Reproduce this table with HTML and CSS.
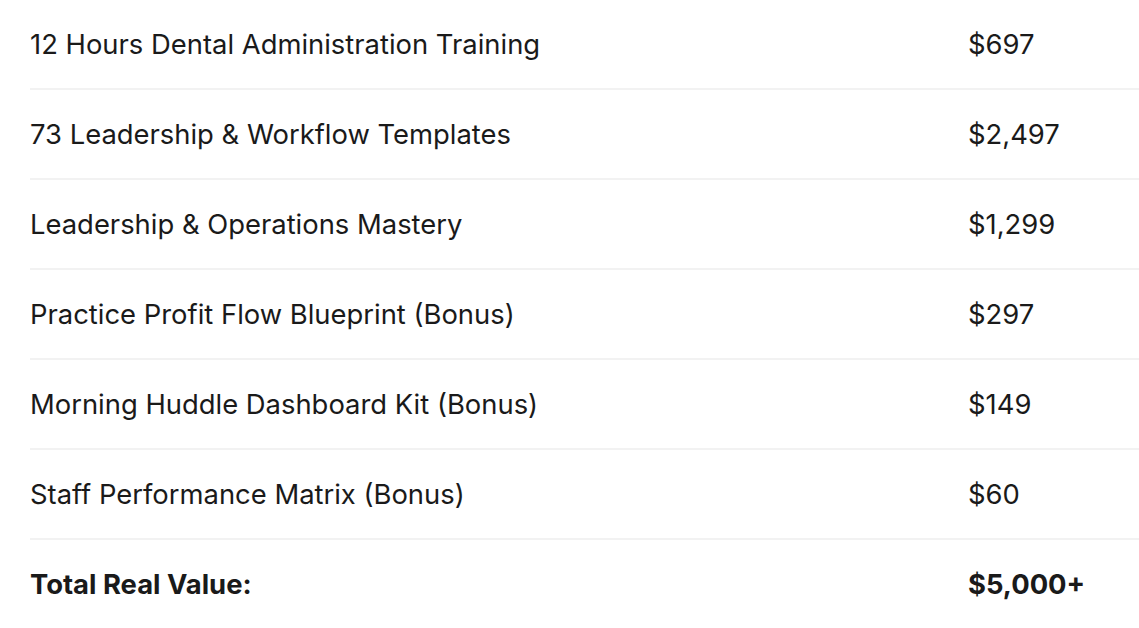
FILE: index.html
```html
<!DOCTYPE html>
<html lang="en">
<head>
<meta charset="utf-8">
<title>Value Stack</title>
<link rel="stylesheet" href="styles.css">
</head>
<body>
<div class="stack">
  <div class="row"><span class="item">12 Hours Dental Administration Training</span><span class="price">$697</span></div>
  <div class="row"><span class="item">73 Leadership &amp; Workflow Templates</span><span class="price">$2,497</span></div>
  <div class="row"><span class="item">Leadership &amp; Operations Mastery</span><span class="price">$1,299</span></div>
  <div class="row"><span class="item">Practice Profit Flow Blueprint (Bonus)</span><span class="price">$297</span></div>
  <div class="row"><span class="item">Morning Huddle Dashboard Kit (Bonus)</span><span class="price">$149</span></div>
  <div class="row"><span class="item">Staff Performance Matrix (Bonus)</span><span class="price">$60</span></div>
  <div class="row total"><span class="item">Total Real Value:</span><span class="price">$5,000+</span></div>
</div>
</body>
</html>
```
FILE: styles.css
```css
html, body {
  margin: 0;
  padding: 0;
  background: #ffffff;
}
body {
  font-family: Inter, "Noto Sans", sans-serif;
  color: #1a1a1a;
  overflow: hidden;
}
.stack {
  padding-left: 30px;
}
.row {
  display: grid;
  grid-template-columns: 938px 1fr;
  align-items: center;
  height: 87px;
  padding-top: 1px;
  border-bottom: 2px solid #f2f2f2;
  font-size: 27.4px;
  line-height: 1;
}
.row.total {
  border-bottom: none;
  font-weight: 700;
}
```
